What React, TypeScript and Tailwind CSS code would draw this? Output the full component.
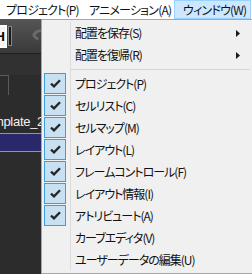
import React from "react";

const checked = [
  "プロジェクト(P)",
  "セルリスト(C)",
  "セルマップ(M)",
  "レイアウト(L)",
  "フレームコントロール(F)",
  "レイアウト情報(I)",
  "アトリビュート(A)",
];
const unchecked = ["カーブエディタ(V)", "ユーザーデータの編集(U)"];

function Check() {
  return (
    <svg width="11" height="9" viewBox="0 0 11 9">
      <path d="M1 4.6 L4 7.4 L10 1.2" fill="none" stroke="#262626" strokeWidth="2.3" />
    </svg>
  );
}

function Arrow() {
  return (
    <svg width="4" height="7" viewBox="0 0 4 7" className="mr-[12px]">
      <path d="M0 0 L4 3.5 L0 7 Z" fill="#1a1a1a" />
    </svg>
  );
}

function Row({ label, on, sub }: { label: string; on?: boolean; sub?: boolean }) {
  return (
    <div className="flex h-[22px] items-stretch">
      <div className="w-[29px] border-r border-[#dcdcdc] pl-[2px]">
        {on && (
          <div className="flex h-[21px] w-[22px] items-center justify-center border border-[#3a9fdc] bg-[#c7e0f2]">
            <Check />
          </div>
        )}
      </div>
      <div className="flex flex-1 items-center justify-between pl-[4px] text-[#111]">
        <span className="tracking-[-1px] whitespace-nowrap">{label}</span>
        {sub && <Arrow />}
      </div>
    </div>
  );
}

export default function App() {
  return (
    <div className="relative h-[274px] w-[252px] overflow-hidden bg-[#2c2c2c] font-['Noto_Sans_CJK_JP',sans-serif] text-[12px] leading-none [font-feature-settings:'palt']">
      {/* menu bar */}
      <div className="flex h-[19px] items-stretch bg-white text-[#111] whitespace-nowrap tracking-[-0.8px]">
        <div className="flex w-[81px] items-center pl-[6px]">プロジェクト(P)</div>
        <div className="flex w-[93px] items-center pl-[8px]">アニメーション(A)</div>
        <div className="flex w-[77px] items-center border border-[#99d1ff] bg-[#cce8ff] pl-[8px]">ウィンドウ(W)</div>
      </div>

      {/* app behind the menu */}
      <div className="flex h-[35px] items-center gap-[10px] border-b border-[#1e1e1e] bg-gradient-to-b from-[#555555] to-[#3a3a3a]">
        <div className="flex items-center gap-[1px]">
          <div className="flex h-[23px] w-[7px] items-center justify-end border-y-2 border-r-2 border-white bg-[#f4f4f4] font-['Liberation_Sans',sans-serif] text-[13px] font-bold text-black">
            H
          </div>
          <div className="h-[20px] w-[4px] border border-[#888] bg-[#1a1a1a]" />
        </div>
        <svg width="22" height="18" viewBox="0 0 22 18" className="ml-[9px]">
          <path d="M2 8 L7 3.5 M2 8 L7 12.5" stroke="#6b6b6b" strokeWidth="2.6" fill="none" />
          <path d="M3 8 C8 1 20 2 19 10 C18.5 13.5 15 15.5 12 15" stroke="#6b6b6b" strokeWidth="2.6" fill="none" />
        </svg>
      </div>
      <div className="h-[21px] bg-[#313131]" />
      <div className="h-[20px] w-[9px] border-t border-r border-[#5a5a5a]" />
      <div className="flex h-[38px] w-[44px] items-end justify-end overflow-hidden pb-[5px] font-['Liberation_Sans',sans-serif] text-[13px] tracking-[-0.3px] whitespace-nowrap text-[#f2f2f2]">
        Template_2
      </div>
      <div className="h-[19px] border-y border-[#1cc4ee] bg-[#29286a]" />

      {/* dropdown */}
      <div className="absolute top-[19px] right-0 bottom-0 left-[41px] border border-r-0 border-[#a7a7a7] bg-[#f0f0f0] pt-[2px]">
        <Row label="配置を保存(S)" sub />
        <Row label="配置を復帰(R)" sub />
        <div className="flex h-[7px]">
          <div className="w-[29px] border-r border-[#dcdcdc]" />
          <div className="flex flex-1 items-center pr-[2px]">
            <div className="h-[1px] w-full bg-[#d5d5d5]" />
          </div>
        </div>
        {checked.map((l) => (
          <Row key={l} label={l} on />
        ))}
        {unchecked.map((l) => (
          <Row key={l} label={l} />
        ))}
      </div>
    </div>
  );
}
